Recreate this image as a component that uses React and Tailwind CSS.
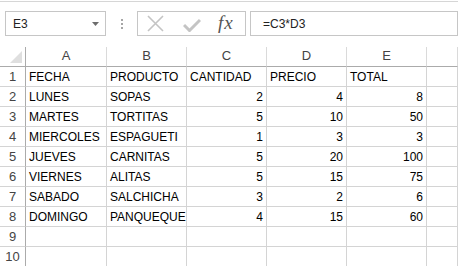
import React from "react";

const rows = [
  ["FECHA", "PRODUCTO", "CANTIDAD", "PRECIO", "TOTAL"],
  ["LUNES", "SOPAS", 2, 4, 8],
  ["MARTES", "TORTITAS", 5, 10, 50],
  ["MIERCOLES", "ESPAGUETI", 1, 3, 3],
  ["JUEVES", "CARNITAS", 5, 20, 100],
  ["VIERNES", "ALITAS", 5, 15, 75],
  ["SABADO", "SALCHICHA", 3, 2, 6],
  ["DOMINGO", "PANQUEQUE", 4, 15, 60],
  ["", "", "", "", ""],
  ["", "", "", "", ""],
];

const font = { fontFamily: '"Liberation Sans", Arial, sans-serif' };

export default function App() {
  return (
    <div className="w-[458px] h-[266px] overflow-hidden bg-white text-[12px]" style={font}>
      <div className="h-[1px]" />
      <div className="h-[1px] bg-[#d6d6d6]" />
      {/* toolbar */}
      <div className="flex h-[45px] pt-[9px] pl-[5px]">
        <div className="w-[101px] h-[25px] border border-[#c6c6c6] flex items-center pl-[7px] pr-[6px] text-[#222]">
          <span className="flex-1 leading-none pt-[1px]">E3</span>
          <svg width="7" height="4" viewBox="0 0 7 4"><path d="M0 0H7L3.5 4Z" fill="#6d6d6d" /></svg>
        </div>
        <div className="w-[31px] h-[25px] flex flex-col items-center justify-center gap-[2px]">
          <div className="w-[2px] h-[2px] bg-[#a6a6a6]" />
          <div className="w-[2px] h-[2px] bg-[#a6a6a6]" />
          <div className="w-[2px] h-[2px] bg-[#a6a6a6]" />
        </div>
        <div className="w-[109px] h-[25px] border border-[#c6c6c6] flex items-center">
          <svg className="ml-[9px]" width="17" height="17" viewBox="0 0 17 17">
            <path d="M1 1L16 16M16 1L1 16" stroke="#c4c4c4" strokeWidth="1.6" />
          </svg>
          <svg className="ml-[19px] mt-[3px]" width="18" height="14" viewBox="0 0 18 14">
            <path d="M1 7L6.5 12.5L17 2" stroke="#c4c4c4" strokeWidth="3" fill="none" />
          </svg>
          <span
            className="ml-[17px] text-[#555] italic text-[19px] leading-none tracking-[1px] pb-[2px]"
            style={{ fontFamily: '"Liberation Serif", "Times New Roman", serif' }}
          >
            fx
          </span>
        </div>
        <div className="ml-[4px] flex-1 h-[25px] border border-[#c6c6c6] flex items-center pl-[12px] text-[#222]">
          <span className="leading-none pt-[1px]">=C3*D3</span>
        </div>
      </div>
      {/* grid */}
      <div className="grid grid-cols-[26px_81px_80px_80px_80px_80px_1fr] auto-rows-[20px]">
        {/* header row */}
        <div className="relative border-r border-b border-r-[#ababab] border-b-[#ababab]">
          <svg className="absolute right-[3px] bottom-[3px]" width="12" height="12" viewBox="0 0 12 12">
            <path d="M12 0V12H0Z" fill="#dfdfdf" />
          </svg>
        </div>
        {["A", "B", "C", "D", "E", ""].map((c, i) => (
          <div
            key={i}
            className="border-r border-b border-r-[#dadada] border-b-[#ababab] flex items-end justify-center pb-[3px] leading-[14px] text-[#444] text-[13px]"
          >
            {c}
          </div>
        ))}
        {rows.map((r, ri) => (
          <React.Fragment key={ri}>
            <div className="border-r border-b border-r-[#ababab] border-b-[#d4d4d4] flex items-end justify-center pb-[2px] leading-[14px] text-[#444] text-[13px]">
              {ri + 1}
            </div>
            {r.map((v, ci) => (
              <div
                key={ci}
                className={
                  "border-r border-b border-[#d4d4d4] flex items-end pb-[2px] leading-[14px] text-black whitespace-nowrap overflow-hidden " +
                  (typeof v === "number" ? "justify-end pr-[3px]" : "justify-start pl-[3px]")
                }
              >
                {v}
              </div>
            ))}
            <div className="border-r border-b border-[#d4d4d4]" />
          </React.Fragment>
        ))}
      </div>
    </div>
  );
}
